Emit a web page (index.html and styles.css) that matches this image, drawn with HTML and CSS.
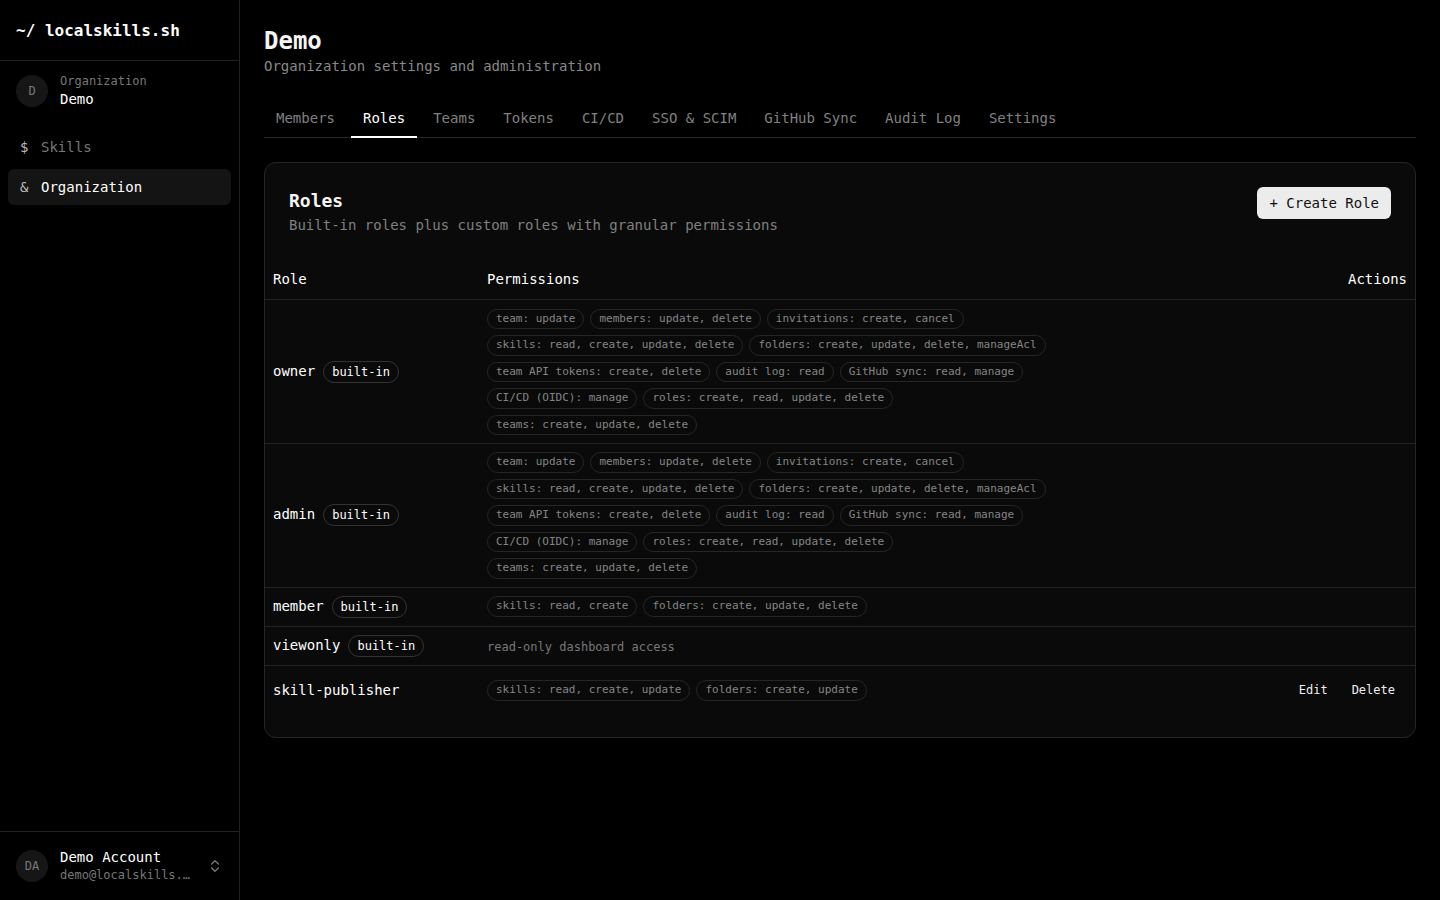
FILE: index.html
```html
<!DOCTYPE html>
<html lang="en">
<head>
  <meta charset="UTF-8" />
  <title>Demo - Roles</title>
  <link rel="stylesheet" href="styles.css">
</head>
<body>
  <div class="app">
    <aside class="sidebar">
      <div class="brand">~/ localskills.sh</div>

      <div class="org">
        <div class="avatar">D</div>
        <div class="org-text">
          <div class="org-label">Organization</div>
          <div class="org-name">Demo</div>
        </div>
      </div>

      <nav class="nav">
        <a class="nav-item"><span class="nav-sym">$</span>Skills</a>
        <a class="nav-item active"><span class="nav-sym">&amp;</span>Organization</a>
      </nav>

      <div class="account">
        <div class="avatar">DA</div>
        <div class="account-text">
          <div class="account-name">Demo Account</div>
          <div class="account-mail">demo@localskills.…</div>
        </div>
        <svg class="chevrons" width="16" height="16" viewBox="0 0 24 24" fill="none" stroke="currentColor" stroke-width="2" stroke-linecap="round" stroke-linejoin="round">
          <path d="m7 15 5 5 5-5" />
          <path d="m7 9 5-5 5 5" />
        </svg>
      </div>
    </aside>

    <main class="main">
      <h1>Demo</h1>
      <p class="subtitle">Organization settings and administration</p>

      <div class="tabs">
        <a class="tab">Members</a>
        <a class="tab active">Roles</a>
        <a class="tab">Teams</a>
        <a class="tab">Tokens</a>
        <a class="tab">CI/CD</a>
        <a class="tab">SSO &amp; SCIM</a>
        <a class="tab">GitHub Sync</a>
        <a class="tab">Audit Log</a>
        <a class="tab">Settings</a>
      </div>

      <section class="card">
        <div class="card-head">
          <div>
            <h2>Roles</h2>
            <p class="card-desc">Built-in roles plus custom roles with granular permissions</p>
          </div>
          <button class="btn-primary">+ Create Role</button>
        </div>

        <table class="roles">
          <thead>
            <tr>
              <th class="col-role">Role</th>
              <th>Permissions</th>
              <th class="col-actions">Actions</th>
            </tr>
          </thead>
          <tbody id="rolesBody"></tbody>
        </table>
      </section>
    </main>
  </div>

<script>
  const fullPerms = [
    'team: update',
    'members: update, delete',
    'invitations: create, cancel',
    'skills: read, create, update, delete',
    'folders: create, update, delete, manageAcl',
    'team API tokens: create, delete',
    'audit log: read',
    'GitHub sync: read, manage',
    'CI/CD (OIDC): manage',
    'roles: create, read, update, delete',
    'teams: create, update, delete'
  ];

  const roles = [
    { name: 'owner', builtin: true, perms: fullPerms },
    { name: 'admin', builtin: true, perms: fullPerms },
    { name: 'member', builtin: true, perms: ['skills: read, create', 'folders: create, update, delete'] },
    { name: 'viewonly', builtin: true, note: 'read-only dashboard access' },
    { name: 'skill-publisher', builtin: false, perms: ['skills: read, create, update', 'folders: create, update'] }
  ];

  function renderRoles() {
    const tbody = document.getElementById('rolesBody');

    roles.forEach(role => {
      const row = document.createElement('tr');
      if (!role.builtin) row.className = 'custom';

      const tdName = document.createElement('td');
      tdName.className = 'col-role';
      const name = document.createElement('span');
      name.className = 'role-name';
      name.textContent = role.name;
      tdName.appendChild(name);
      if (role.builtin) {
        const badge = document.createElement('span');
        badge.className = 'badge';
        badge.textContent = 'built-in';
        tdName.appendChild(badge);
      }
      row.appendChild(tdName);

      const tdPerms = document.createElement('td');
      if (role.note) {
        const note = document.createElement('span');
        note.className = 'note';
        note.textContent = role.note;
        tdPerms.appendChild(note);
      } else {
        const list = document.createElement('div');
        list.className = 'chips';
        role.perms.forEach(p => {
          const chip = document.createElement('span');
          chip.className = 'chip';
          chip.textContent = p;
          list.appendChild(chip);
        });
        tdPerms.appendChild(list);
      }
      row.appendChild(tdPerms);

      const tdActions = document.createElement('td');
      tdActions.className = 'col-actions';
      if (!role.builtin) {
        tdActions.innerHTML = '<button class="btn-ghost">Edit</button><button class="btn-ghost">Delete</button>';
      }
      row.appendChild(tdActions);

      tbody.appendChild(row);
    });
  }

  renderRoles();
</script>
</body>
</html>
```

FILE: styles.css
```css
* {
  box-sizing: border-box;
}
body {
  margin: 0;
  background: #000;
  color: #ededed;
  font-family: "DejaVu Sans Mono", "Liberation Mono", monospace;
  font-size: 14px;
}
.app {
  display: flex;
  min-height: 100vh;
}

/* sidebar */
.sidebar {
  width: 240px;
  flex-shrink: 0;
  border-right: 1px solid #222;
  display: flex;
  flex-direction: column;
  height: 100vh;
}
.brand {
  height: 61px;
  padding: 0 16px;
  display: flex;
  align-items: center;
  font-size: 16px;
  font-weight: bold;
  color: #fff;
  border-bottom: 1px solid #222;
}
.org {
  display: flex;
  align-items: center;
  gap: 12px;
  padding: 12px 16px;
}
.avatar {
  width: 32px;
  height: 32px;
  border-radius: 50%;
  background: #161616;
  color: #777;
  font-size: 12px;
  display: flex;
  align-items: center;
  justify-content: center;
  flex-shrink: 0;
}
.org-label {
  font-size: 12px;
  color: #777;
  line-height: 16px;
}
.org-name {
  font-size: 14px;
  color: #fff;
  line-height: 20px;
}
.nav {
  padding: 8px;
  display: flex;
  flex-direction: column;
  gap: 4px;
  flex: 1;
}
.nav-item {
  height: 36px;
  display: flex;
  align-items: center;
  padding: 0 12px;
  border-radius: 6px;
  color: #777;
}
.nav-sym {
  color: #bbb;
  width: 21px;
}
.nav-item.active {
  background: #141414;
  color: #fff;
}
.account {
  border-top: 1px solid #222;
  height: 69px;
  padding: 0 16px;
  display: flex;
  align-items: center;
  gap: 12px;
}
.account-text {
  flex: 1;
  min-width: 0;
}
.account-name {
  font-size: 14px;
  color: #fff;
  line-height: 18px;
}
.account-mail {
  font-size: 12px;
  color: #777;
  line-height: 18px;
  white-space: nowrap;
}
.chevrons {
  color: #777;
  width: 16px;
  height: 18px;
}

/* main */
.main {
  flex: 1;
  padding: 26px 24px 24px;
  min-width: 0;
}
h1 {
  margin: 0;
  font-size: 24px;
  line-height: 30px;
  font-weight: bold;
  color: #f5f5f5;
}
.subtitle {
  margin: 0;
  color: #888;
  line-height: 20px;
}
.tabs {
  margin-top: 24px;
  display: flex;
  gap: 4px;
  border-bottom: 1px solid #262626;
}
.tab {
  padding: 8px 12px 8px;
  line-height: 20px;
  color: #808080;
  border-bottom: 2px solid transparent;
  margin-bottom: -1px;
}
.tab.active {
  color: #fff;
  border-bottom-color: #fff;
}

.card {
  margin-top: 24px;
  background: #0a0a0a;
  border: 1px solid #262626;
  border-radius: 12px;
  padding-bottom: 22px;
}
.card-head {
  display: flex;
  justify-content: space-between;
  align-items: flex-start;
  padding: 24px 24px 24px;
}
h2 {
  margin: 0;
  font-size: 18px;
  line-height: 28px;
  font-weight: bold;
  color: #f5f5f5;
}
.card-desc {
  margin: 0;
  color: #808080;
  line-height: 20px;
}
.btn-primary {
  font-family: inherit;
  font-size: 14px;
  background: #ececec;
  color: #111;
  border: none;
  border-radius: 6px;
  height: 32px;
  padding: 0 12px;
}

table.roles {
  width: 100%;
  border-collapse: collapse;
}
.roles th {
  height: 40px;
  padding: 0 8px;
  text-align: left;
  font-weight: normal;
  color: #fff;
  border-bottom: 1px solid #222;
}
.roles td {
  padding: 8px;
  border-bottom: 1px solid #222;
  vertical-align: middle;
}
.roles tbody tr:first-child td {
  padding-top: 9px;
}
.roles tr.custom td {
  border-bottom: none;
  height: 50px;
}
.roles .col-role {
  width: 214px;
}
.roles .col-actions {
  text-align: right;
  white-space: nowrap;
}
.role-name {
  color: #fff;
}
.badge {
  display: inline-block;
  margin-left: 8px;
  font-size: 12px;
  line-height: 18px;
  padding: 1px 8px;
  border: 1px solid #333;
  border-radius: 999px;
  color: #fff;
}
.chips {
  display: flex;
  flex-wrap: wrap;
  gap: 6px;
  max-width: 560px;
}
.chip {
  font-size: 11px;
  line-height: 16.5px;
  padding: 1px 8px;
  border: 1px solid #262626;
  border-radius: 999px;
  color: #858585;
}
.note {
  font-size: 12px;
  color: #777;
}
.btn-ghost {
  font-family: inherit;
  font-size: 12px;
  background: none;
  border: none;
  color: #eee;
  padding: 8px 12px;
}
```
